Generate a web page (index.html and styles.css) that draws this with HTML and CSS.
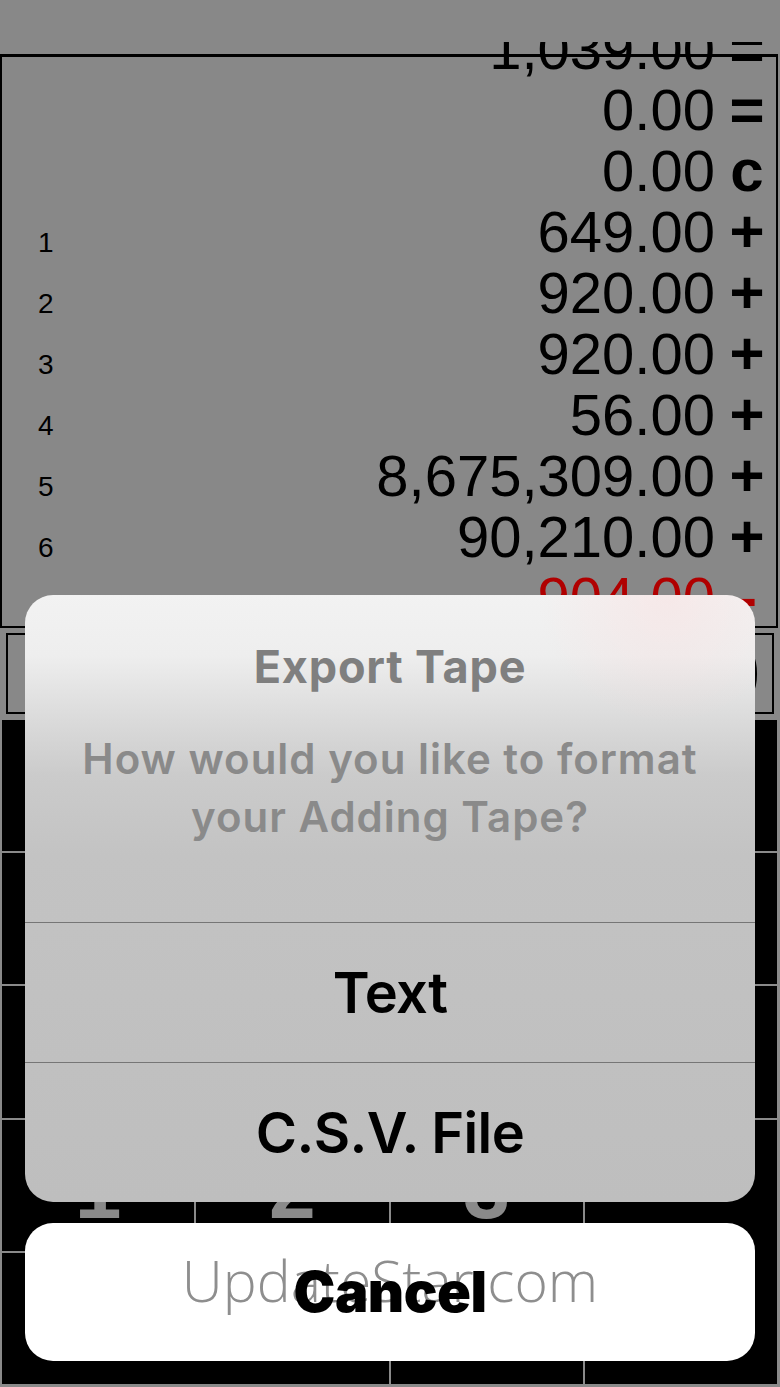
FILE: index.html
```html
<!DOCTYPE html>
<html>
<head>
<meta charset="utf-8">
<title>Adding Tape – Export</title>
<link rel="stylesheet" href="styles.css">
</head>
<body>
<div class="screen">
  <div class="tape">
    <div class="rows">
      <div class="row"><span class="idx"></span><span class="num">1,039.00</span><span class="op">=</span></div>
      <div class="row"><span class="idx"></span><span class="num">0.00</span><span class="op">=</span></div>
      <div class="row"><span class="idx"></span><span class="num">0.00</span><span class="op">c</span></div>
      <div class="row"><span class="idx">1</span><span class="num">649.00</span><span class="op">+</span></div>
      <div class="row"><span class="idx">2</span><span class="num">920.00</span><span class="op">+</span></div>
      <div class="row"><span class="idx">3</span><span class="num">920.00</span><span class="op">+</span></div>
      <div class="row"><span class="idx">4</span><span class="num">56.00</span><span class="op">+</span></div>
      <div class="row"><span class="idx">5</span><span class="num">8,675,309.00</span><span class="op">+</span></div>
      <div class="row"><span class="idx">6</span><span class="num">90,210.00</span><span class="op">+</span></div>
      <div class="row neg"><span class="idx">7</span><span class="num">904.00</span><span class="op">-</span></div>
    </div>
  </div>

  <div class="display">0</div>

  <div class="keypad">
    <div class="key">C</div>
    <div class="key">±</div>
    <div class="key">÷</div>
    <div class="key">×</div>
    <div class="key">7</div>
    <div class="key">8</div>
    <div class="key">9</div>
    <div class="key">−</div>
    <div class="key">4</div>
    <div class="key">5</div>
    <div class="key">6</div>
    <div class="key">+</div>
    <div class="key">1</div>
    <div class="key">2</div>
    <div class="key">3</div>
    <div class="key key-tall">=</div>
    <div class="key key-wide">0</div>
    <div class="key">.</div>
  </div>

  <div class="sheet">
    <div class="alert">
      <div class="alert-head">
        <div class="alert-title">Export Tape</div>
        <div class="alert-msg">How would you like to format<br>your Adding Tape?</div>
      </div>
      <div class="alert-btn alert-btn-first">Text</div>
      <div class="alert-btn">C.S.V. File</div>
    </div>
    <div class="cancel">
      <span class="watermark">UpdateStar.com</span>
      <span class="cancel-label">Cancel</span>
    </div>
  </div>
</div>
</body>
</html>
```

FILE: styles.css
```css
html, body {
  margin: 0;
  padding: 0;
}

body {
  background: #888888;
}

.screen {
  position: relative;
  width: 780px;
  height: 1387px;
  overflow: hidden;
  background: #888888;
  font-family: "Liberation Sans", Arial, sans-serif;
}

/* ---------- tape ---------- */
.tape {
  margin-top: 42px;
  width: 778px;
  height: 586px;
  box-sizing: border-box;
  overflow: hidden;
  border-bottom: 2px solid #000;
  background:
    linear-gradient(#000, #000) 0 12px / 100% 3px no-repeat,
    linear-gradient(#000, #000) 0 12px / 2px 100% no-repeat,
    linear-gradient(#000, #000) right 0 top 12px / 2px 100% no-repeat,
    #888888;
}

.rows {
  margin-top: -24px;
  padding: 0 13px 0 38px;
}

.row {
  display: flex;
  align-items: baseline;
  height: 61px;
  line-height: 61px;
  color: #000;
}

.idx {
  flex: none;
  width: 40px;
  font-size: 28px;
}

.num {
  flex: 1;
  text-align: right;
  font-size: 58px;
}

.op {
  flex: none;
  width: 36px;
  margin-left: 14px;
  text-align: center;
  font-size: 60px;
  font-weight: bold;
}

.neg .num,
.neg .op {
  color: #b00000;
}

/* ---------- display ---------- */
.display {
  margin: 5px 6px 6px 6px;
  height: 81px;
  box-sizing: border-box;
  border: 2px solid #000;
  padding-right: 12px;
  text-align: right;
  font-size: 76px;
  line-height: 77px;
  color: #000;
}

/* ---------- keypad ---------- */
.keypad {
  display: grid;
  grid-template-columns: repeat(4, 1fr);
  grid-template-rows: repeat(5, 1fr);
  gap: 2px;
  height: 667px;
  box-sizing: border-box;
  padding: 0 3px 3px 2px;
  background: #8a8a8a;
}

.key {
  background: #000;
  color: #8a8a8a;
  font-weight: bold;
  font-size: 84px;
  line-height: 84px;
  display: flex;
  align-items: center;
  justify-content: center;
  padding-top: 8px;
  box-sizing: border-box;
}

.key-tall {
  grid-column: 4;
  grid-row: 4 / span 2;
}

.key-wide {
  grid-column: 1 / span 2;
}

/* ---------- action sheet ---------- */
.sheet {
  position: absolute;
  left: 25px;
  top: 595px;
  width: 730px;
  display: flex;
  flex-direction: column;
  gap: 21px;
  font-family: Inter, "Noto Sans", sans-serif;
}

.alert {
  border-radius: 28px;
  overflow: hidden;
  background:
    radial-gradient(circle at 88% 0, rgba(255, 215, 215, 0.35), rgba(255, 215, 215, 0) 130px),
    linear-gradient(to bottom, #f2f2f2 0px, #eeeeee 60px, #dcdcdc 120px, #cbcbcb 180px, #c3c3c3 260px, #bebebe 100%);
}

.alert-head {
  height: 328px;
  box-sizing: border-box;
  padding-top: 46px;
  text-align: center;
  border-bottom: 1px solid #767676;
}

.alert-title {
  font-size: 45px;
  line-height: 52px;
  font-weight: 700;
  letter-spacing: 0.8px;
  color: #7f7f7f;
}

.alert-msg {
  margin-top: 37px;
  font-size: 42px;
  line-height: 58px;
  font-weight: 600;
  letter-spacing: 1px;
  color: #8a8a8a;
}

.alert-btn {
  height: 139px;
  display: flex;
  align-items: center;
  justify-content: center;
  font-size: 56px;
  font-weight: 600;
  letter-spacing: -0.6px;
  color: #000;
}

.alert-btn-first {
  height: 140px;
  box-sizing: border-box;
  border-bottom: 1px solid #767676;
}

.cancel {
  position: relative;
  height: 138px;
  border-radius: 28px;
  background: #ffffff;
  display: flex;
  align-items: center;
  justify-content: center;
}

.cancel-label {
  position: relative;
  z-index: 1;
  font-size: 56px;
  font-weight: 900;
  letter-spacing: -0.5px;
  color: #000;
}

.watermark {
  position: absolute;
  left: 0;
  right: 0;
  top: 29px;
  text-align: center;
  font-family: "Open Sans", sans-serif;
  font-weight: 300;
  font-size: 57px;
  line-height: 1;
  color: #8e8e8e;
}
```
